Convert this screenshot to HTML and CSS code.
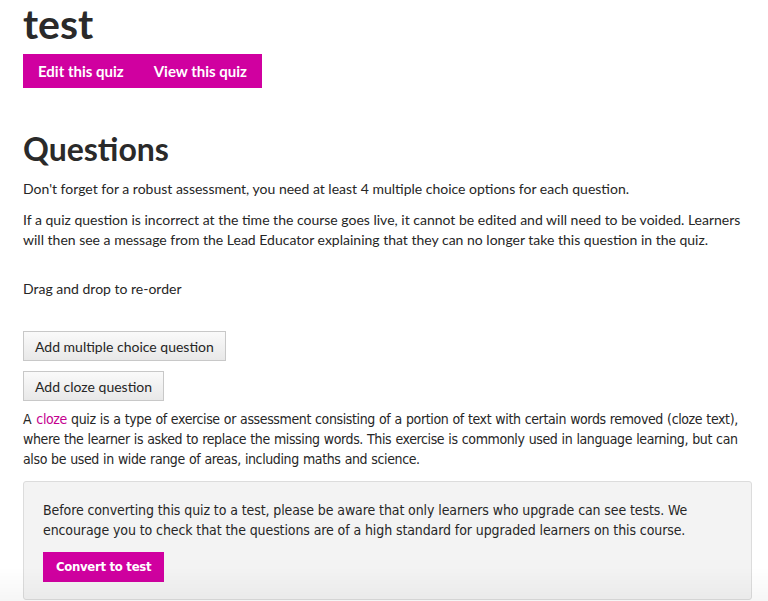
FILE: index.html
```html
<!DOCTYPE html>
<html>
<head>
<meta charset="utf-8">
<link rel="stylesheet" href="styles.css">
</head>
<body>
<main class="page">
  <h1 class="title">test</h1>
  <div class="actions">
    <a class="btn-primary" href="#">Edit this quiz</a>
    <a class="btn-primary" href="#">View this quiz</a>
  </div>
  <h2 class="section-title">Questions</h2>
  <p class="text first">Don't forget for a robust assessment, you need at least 4 multiple choice options for each question.</p>
  <p class="text">If a quiz question is incorrect at the time the course goes live, it cannot be edited and will need to be voided. Learners will then see a message from the Lead Educator explaining that they can no longer take this question in the quiz.</p>
  <p class="text drag">Drag and drop to re-order</p>
  <div class="add-list">
    <button class="btn-secondary">Add multiple choice question</button>
    <button class="btn-secondary">Add cloze question</button>
  </div>
  <p class="narrow cloze">A <a class="link" href="#">cloze</a> quiz is a type of exercise or assessment consisting of a portion of text with certain words removed (cloze text), where the learner is asked to replace the missing words. This exercise is commonly used in language learning, but can also be used in wide range of areas, including maths and science.</p>
  <section class="notice">
    <p class="narrow notice-text">Before converting this quiz to a test, please be aware that only learners who upgrade can see tests. We encourage you to check that the questions are of a high standard for upgraded learners on this course.</p>
    <a class="btn-primary btn-convert" href="#">Convert to test</a>
  </section>
</main>
<div class="fade"></div>
</body>
</html>
```

FILE: styles.css
```css
html, body { margin: 0; padding: 0; background: #fff; }
body { font-family: Lato, "Open Sans", sans-serif; color: #262626; }
.page { padding: 0 16px 0 23px; }
.title { font-size: 41px; font-weight: 700; margin: 0; padding-top: 3px; line-height: 42px; color: #2a2a2a; }
.actions { display: flex; margin-top: 9px; }
.btn-primary { display: inline-block; background: #d000a0; color: #fff; font-weight: 700; font-size: 15px; text-decoration: none; height: 34px; line-height: 34px; padding: 0 15px; }
.section-title { font-size: 32px; font-weight: 700; margin: 42px 0 0; line-height: 38px; color: #2a2a2a; }
.text { font-size: 14px; line-height: 20px; margin: 11px 0 0; }
.text.first { margin-top: 11px; }
.drag { margin-top: 29px; }
.add-list { display: flex; flex-direction: column; align-items: flex-start; gap: 10px; margin-top: 32px; }
.btn-secondary { font-family: inherit; font-size: 14px; color: #262626; height: 30px; padding: 0 11px; background: linear-gradient(#fafafa, #e8e8e8); border: 1px solid #c8c8c8; border-radius: 0; }
.narrow { font-family: "DejaVu Sans Condensed", sans-serif; font-size: 14px; line-height: 20px; margin: 8px 0 0; }
.cloze { letter-spacing: -0.38px; word-spacing: 0.5px; }
.link { color: #c4008f; text-decoration: none; margin-left: 1px; }
.notice { margin-top: 12px; background: #f3f3f3; border: 1px solid #dcdcdc; border-radius: 3px; padding: 18px 19px 17px; }
.notice-text { margin: 0; letter-spacing: -0.1px; }
.btn-convert { margin-top: 12px; height: 30px; line-height: 30px; padding: 0 13px; font-size: 13px; letter-spacing: -0.3px; font-family: "DejaVu Sans Condensed", sans-serif; }
.fade { position: fixed; left: 0; right: 0; bottom: 0; height: 34px; background: linear-gradient(rgba(0,0,0,0), rgba(0,0,0,0.035)); pointer-events: none; }
```
